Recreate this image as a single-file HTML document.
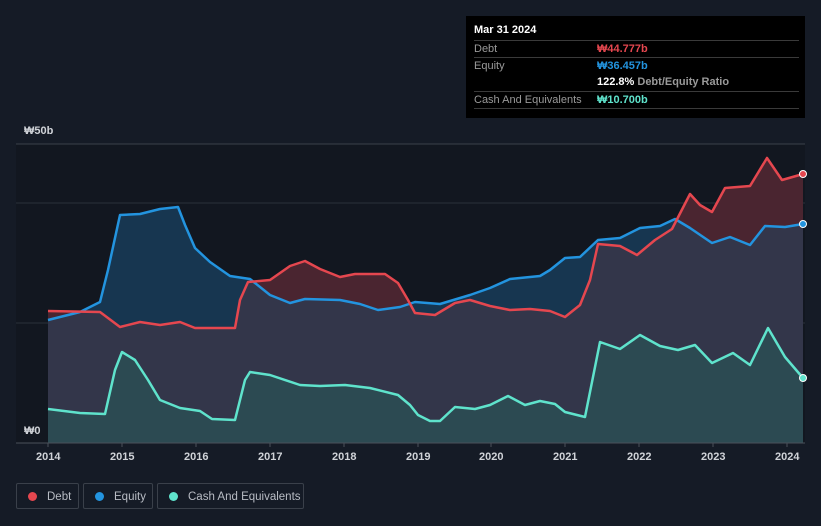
<!DOCTYPE html>
<html><head><style>
body{margin:0;width:821px;height:526px;background:#151b26;font-family:"Liberation Sans",sans-serif;overflow:hidden;position:relative}
.tt{position:absolute;left:466px;top:16px;width:339px;height:102px;background:#000;color:#fff;font-size:11px}
.row{position:absolute;left:8px;width:325px;border-top:1px solid #3a3a3a;height:16px;line-height:16px;color:#9a9a9a}
.row span{position:absolute;left:123px;font-weight:bold}
.leg{position:absolute;top:483px;height:26px;border:1px solid #3a404a;border-radius:2px;color:#b8bcc4;font-size:11.5px;line-height:26px;box-sizing:border-box;white-space:nowrap}
.dot{display:inline-block;width:9px;height:9px;border-radius:50%;margin:0 10px 0 11px;vertical-align:-1px}
.ax{position:absolute;color:#d0d3d8;font-size:11px;font-weight:bold}
</style></head><body>
<svg width="821" height="526" style="position:absolute;left:0;top:0">
<defs>
<clipPath id="eq"><path d="M48,320 L80,312 100,302 108,270 120,215 140,214 160,209 178,207 185,225 195,248 210,262 230,276 250,279 270,295 290,303 305,299 340,300 360,304 378,310 400,307 415,302 440,304 470,295 490,288 510,279 540,276 550,270 565,258 580,257 598,240 620,238 640,228 660,226 675,219 690,228 712,243 730,237 750,245 765,226 785,227 803,224 L803,443 L48,443Z"/></clipPath>
</defs>
<rect x="16" y="144" width="789" height="299" fill="#121720"/>
<line x1="16" y1="144" x2="805" y2="144" stroke="#3a404a"/>
<line x1="16" y1="203" x2="805" y2="203" stroke="#2a303a"/>
<line x1="16" y1="323" x2="805" y2="323" stroke="#2a303a"/>
<path d="M48,320 L80,312 100,302 108,270 120,215 140,214 160,209 178,207 185,225 195,248 210,262 230,276 250,279 270,295 290,303 305,299 340,300 360,304 378,310 400,307 415,302 440,304 470,295 490,288 510,279 540,276 550,270 565,258 580,257 598,240 620,238 640,228 660,226 675,219 690,228 712,243 730,237 750,245 765,226 785,227 803,224 L803,443 L48,443Z" fill="#173650"/>
<path d="M48,311 L100,312 108,318 120,327 140,322 160,325 180,322 195,328 235,328 240,300 248,282 270,280 290,266 305,261 320,269 340,277 355,274 385,274 398,283 408,300 415,313 435,315 455,303 470,300 490,306 510,310 530,309 550,311 565,317 580,305 590,280 598,244 620,246 637,255 655,240 672,229 690,194 700,205 712,212 725,188 750,186 767,158 782,180 803,174 L803,443 L48,443Z" fill="#4a2530"/>
<path d="M48,311 L100,312 108,318 120,327 140,322 160,325 180,322 195,328 235,328 240,300 248,282 270,280 290,266 305,261 320,269 340,277 355,274 385,274 398,283 408,300 415,313 435,315 455,303 470,300 490,306 510,310 530,309 550,311 565,317 580,305 590,280 598,244 620,246 637,255 655,240 672,229 690,194 700,205 712,212 725,188 750,186 767,158 782,180 803,174 L803,443 L48,443Z" fill="#33364a" clip-path="url(#eq)"/>
<path d="M48,409 L80,413 105,414 115,370 122,352 135,360 148,380 160,400 180,408 200,411 212,419 235,420 245,380 250,372 270,375 300,385 320,386 345,385 370,388 398,395 410,405 418,415 430,421 440,421 455,407 475,409 490,405 508,396 525,405 540,401 555,404 565,412 585,417 600,342 620,349 640,335 660,346 678,350 695,345 712,363 733,353 750,365 768,328 785,357 803,378 L803,443 L48,443Z" fill="#2c4a52"/>
<polyline fill="none" stroke="#2394df" stroke-width="2.5" stroke-linejoin="round" points="48,320 80,312 100,302 108,270 120,215 140,214 160,209 178,207 185,225 195,248 210,262 230,276 250,279 270,295 290,303 305,299 340,300 360,304 378,310 400,307 415,302 440,304 470,295 490,288 510,279 540,276 550,270 565,258 580,257 598,240 620,238 640,228 660,226 675,219 690,228 712,243 730,237 750,245 765,226 785,227 803,224"/>
<polyline fill="none" stroke="#e5474f" stroke-width="2.5" stroke-linejoin="round" points="48,311 100,312 108,318 120,327 140,322 160,325 180,322 195,328 235,328 240,300 248,282 270,280 290,266 305,261 320,269 340,277 355,274 385,274 398,283 408,300 415,313 435,315 455,303 470,300 490,306 510,310 530,309 550,311 565,317 580,305 590,280 598,244 620,246 637,255 655,240 672,229 690,194 700,205 712,212 725,188 750,186 767,158 782,180 803,174"/>
<polyline fill="none" stroke="#5fe3cc" stroke-width="2.5" stroke-linejoin="round" points="48,409 80,413 105,414 115,370 122,352 135,360 148,380 160,400 180,408 200,411 212,419 235,420 245,380 250,372 270,375 300,385 320,386 345,385 370,388 398,395 410,405 418,415 430,421 440,421 455,407 475,409 490,405 508,396 525,405 540,401 555,404 565,412 585,417 600,342 620,349 640,335 660,346 678,350 695,345 712,363 733,353 750,365 768,328 785,357 803,378"/>
<circle cx="803" cy="174" r="3.5" fill="#e5474f" stroke="#fff" stroke-width="1"/>
<circle cx="803" cy="224" r="3.5" fill="#2394df" stroke="#fff" stroke-width="1"/>
<circle cx="803" cy="378" r="3.5" fill="#5fe3cc" stroke="#fff" stroke-width="1"/>
<line x1="16" y1="443" x2="805" y2="443" stroke="#4a505a"/>
<g stroke="#4a505a"><line x1="48" y1="443" x2="48" y2="447"/><line x1="122" y1="443" x2="122" y2="447"/><line x1="196" y1="443" x2="196" y2="447"/><line x1="270" y1="443" x2="270" y2="447"/><line x1="344" y1="443" x2="344" y2="447"/><line x1="418" y1="443" x2="418" y2="447"/><line x1="491" y1="443" x2="491" y2="447"/><line x1="565" y1="443" x2="565" y2="447"/><line x1="639" y1="443" x2="639" y2="447"/><line x1="713" y1="443" x2="713" y2="447"/><line x1="787" y1="443" x2="787" y2="447"/></g>
</svg>
<div class="ax" style="left:24px;top:125px">₩50b</div>
<div class="ax" style="left:24px;top:425px">₩0</div>
<div class="ax" style="left:36px;top:451px">2014</div>
<div class="ax" style="left:110px;top:451px">2015</div>
<div class="ax" style="left:184px;top:451px">2016</div>
<div class="ax" style="left:258px;top:451px">2017</div>
<div class="ax" style="left:332px;top:451px">2018</div>
<div class="ax" style="left:406px;top:451px">2019</div>
<div class="ax" style="left:479px;top:451px">2020</div>
<div class="ax" style="left:553px;top:451px">2021</div>
<div class="ax" style="left:627px;top:451px">2022</div>
<div class="ax" style="left:701px;top:451px">2023</div>
<div class="ax" style="left:775px;top:451px">2024</div>
<div class="tt">
<div style="position:absolute;left:8px;top:8px;font-weight:bold;font-size:11px">Mar 31 2024</div>
<div class="row" style="top:24px">Debt<span style="color:#e5474f">₩44.777b</span></div>
<div class="row" style="top:41px">Equity<span style="color:#2394df">₩36.457b</span></div>
<div class="row" style="top:58px;border-top:none"><span style="color:#fff">122.8% <b style="color:#9a9a9a">Debt/Equity Ratio</b></span></div>
<div class="row" style="top:75px">Cash And Equivalents<span style="color:#5fe3cc">₩10.700b</span></div>
<div class="row" style="top:92px;height:0"></div>
</div>
<div class="leg" style="left:16px;width:63px"><span class="dot" style="background:#e5474f"></span>Debt</div>
<div class="leg" style="left:83px;width:70px"><span class="dot" style="background:#2394df"></span>Equity</div>
<div class="leg" style="left:157px;width:147px"><span class="dot" style="background:#5fe3cc"></span>Cash And Equivalents</div>
</body></html>
